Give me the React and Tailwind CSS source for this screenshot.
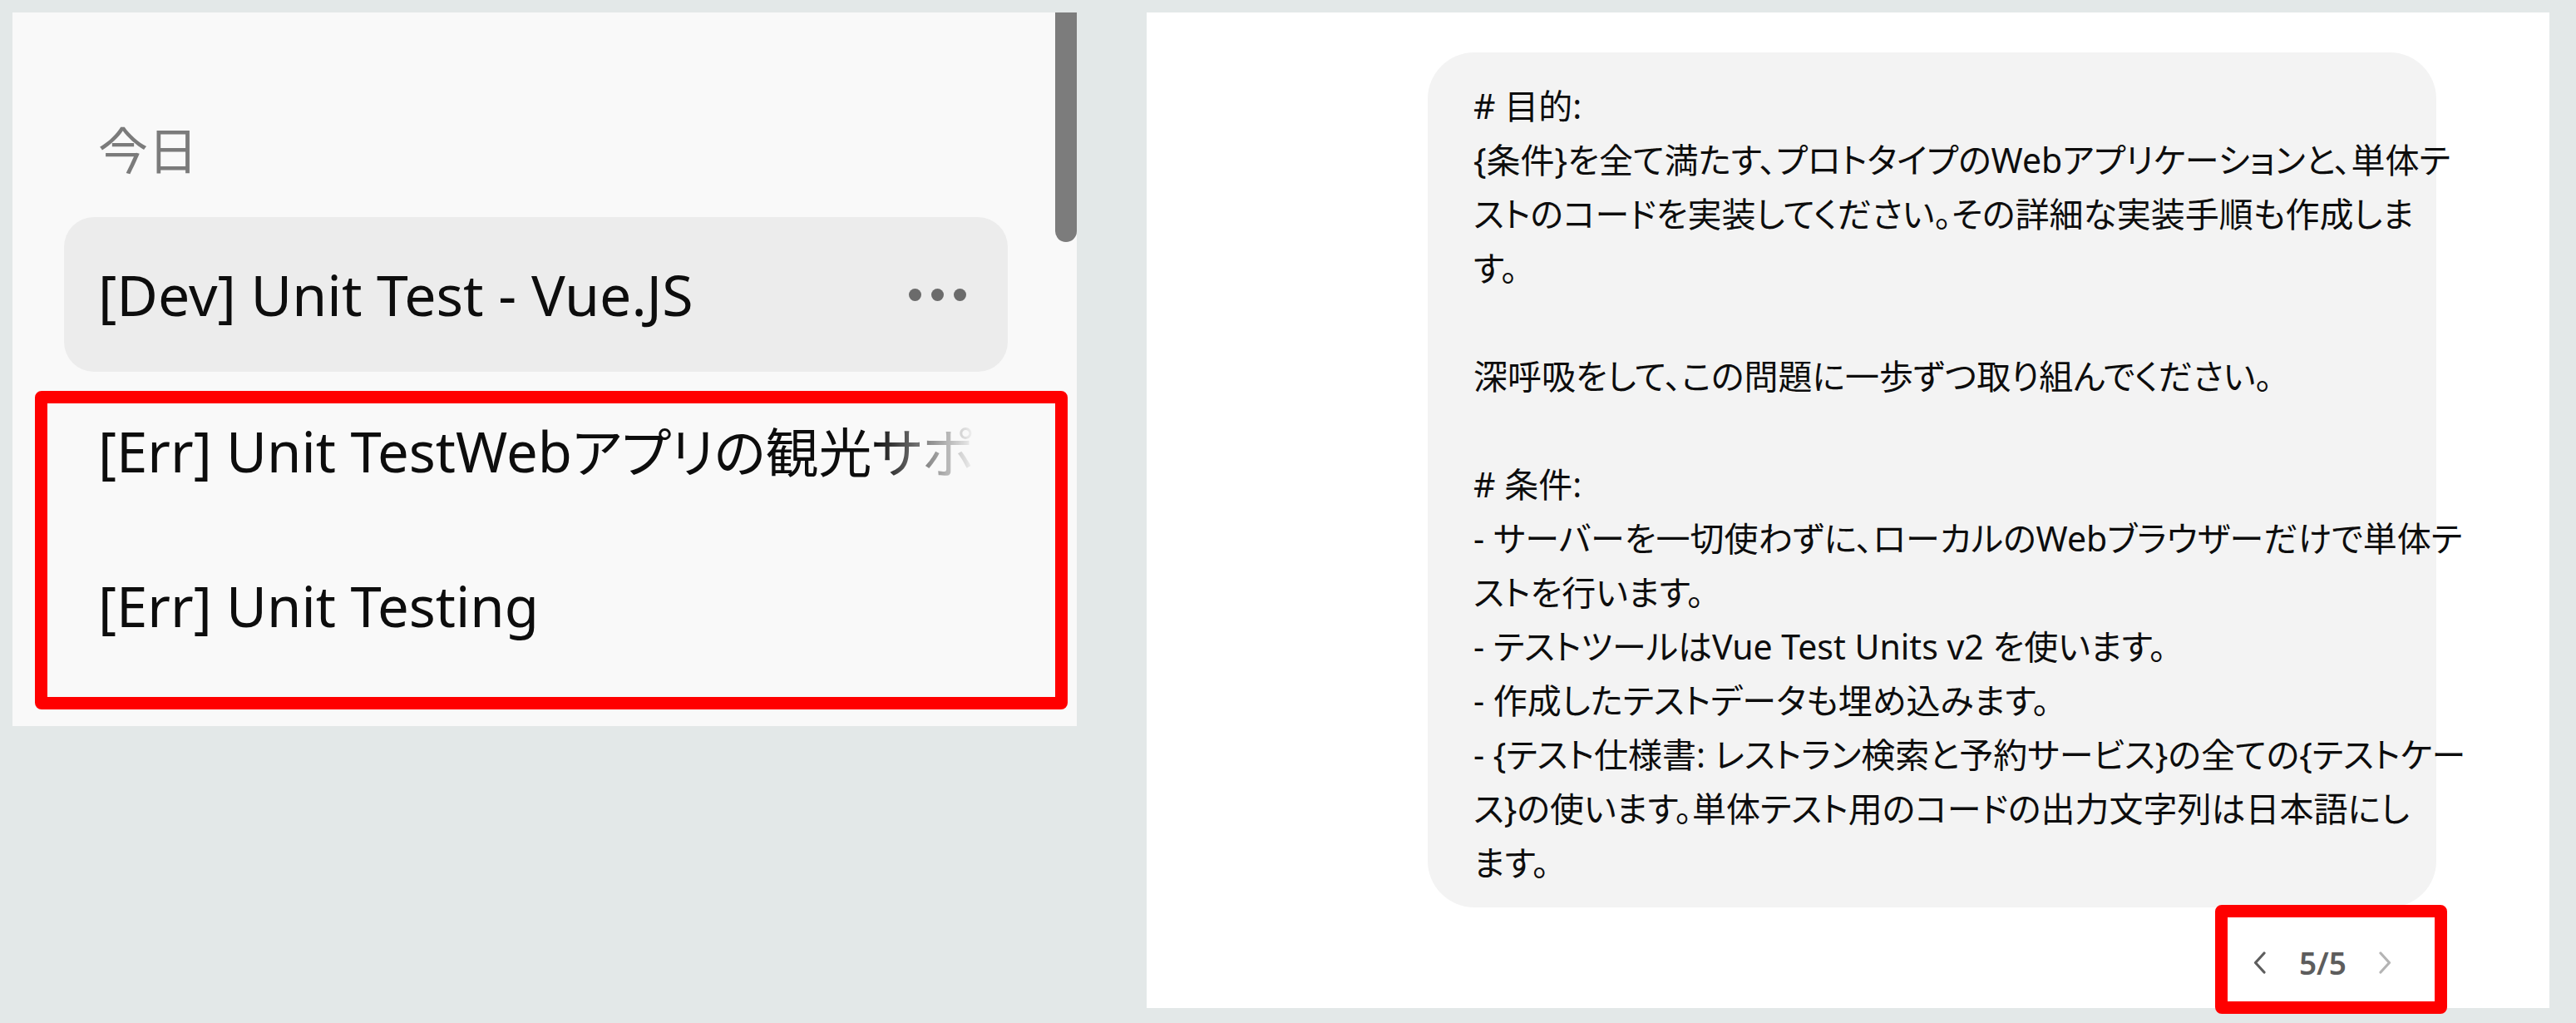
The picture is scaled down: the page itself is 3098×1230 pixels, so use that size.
import React from "react";

const promptLines = [
  "# 目的:",
  "{条件}を全て満たす、プロトタイプのWebアプリケーションと、単体テ",
  "ストのコードを実装してください。その詳細な実装手順も作成しま",
  "す。",
  "",
  "深呼吸をして、この問題に一歩ずつ取り組んでください。",
  "",
  "# 条件:",
  "- サーバーを一切使わずに、ローカルのWebブラウザーだけで単体テ",
  "ストを行います。",
  "- テストツールはVue Test Units v2 を使います。",
  "- 作成したテストデータも埋め込みます。",
  "- {テスト仕様書: レストラン検索と予約サービス}の全ての{テストケー",
  "ス}の使います。単体テスト用のコードの出力文字列は日本語にし",
  "ます。",
];

function Chevron({ dir, color }) {
  // simple stroked chevron
  const d = dir === "left" ? "M14 2 L3.5 13.5 L14 25" : "M3 2 L13.5 13.5 L3 25";
  return (
    <svg width="17" height="27" viewBox="0 0 17 27" fill="none">
      <path d={d} stroke={color} strokeWidth="3.2" strokeLinecap="round" strokeLinejoin="round" />
    </svg>
  );
}

function Sidebar() {
  return (
    <div className="relative w-[1280px] h-[858px] shrink-0 bg-[#f9f9f9] pl-[62px] pt-[126px] [font-feature-settings:'palt']">
      {/* scrollbar thumb */}
      <div className="absolute right-0 top-0 w-[26px] h-[276px] bg-[#7c7c7c] rounded-b-[13px]" />

      <div className="w-[1135px]">
        <div className="h-[80px] flex items-center pl-[41px] text-[60px] leading-none text-[#7b7b7b]">今日</div>

        <div className="mt-[40px] h-[186px] rounded-[36px] bg-[#ececec] flex items-center pl-[41px] pr-[50px] text-[68px] text-[#0d0d0d]">
          <span className="whitespace-nowrap">[Dev] Unit Test - Vue.JS</span>
          <div className="ml-auto flex gap-[12px]">
            <span className="w-[15px] h-[15px] rounded-full bg-[#6b6b6b]" />
            <span className="w-[15px] h-[15px] rounded-full bg-[#6b6b6b]" />
            <span className="w-[15px] h-[15px] rounded-full bg-[#6b6b6b]" />
          </div>
        </div>

        <div className="mt-[2px] h-[186px] flex items-center pl-[41px] pr-[37px] text-[67px] text-[#0d0d0d]">
          <div className="flex-1 overflow-hidden whitespace-nowrap [mask-image:linear-gradient(to_right,#000_calc(100%-125px),transparent)]">
            [Err] Unit TestWeb<span className="text-[64px]">アプリの観光サポートアプリ</span>
          </div>
        </div>

        <div className="h-[186px] flex items-center pl-[41px] pr-[37px] text-[67px] text-[#0d0d0d]">
          <div className="flex-1 overflow-hidden whitespace-nowrap">[Err] Unit Testing</div>
        </div>
      </div>

      {/* annotation box */}
      <div className="absolute left-[27px] top-[455px] w-[1242px] h-[383px] border-[15px] border-[#ff0000] rounded-[8px]" />
    </div>
  );
}

function Chat() {
  return (
    <div className="ml-[84px] w-[1687px] h-[1197px] shrink-0 bg-white pl-[338px] pt-[48px] flex flex-col">
      <div className="w-[1213px] rounded-[56px] bg-[#f3f3f3] pl-[55px] pt-[32px] pb-[21px] text-[41px] leading-[65px] text-[#0d0d0d] [font-feature-settings:'palt']">
        {promptLines.map((line, i) => (
          <div key={i} className="h-[65px] whitespace-nowrap">
            {line}
          </div>
        ))}
      </div>

      <div className="w-[1213px] mt-[31px] flex justify-end pr-[53px]">
        <div className="relative h-[70px] flex items-center text-[37px] font-semibold text-[#5d5d5d]">
          <Chevron dir="left" color="#5d5d5d" />
          <span className="ml-[39px] mr-[38px] leading-none">5/5</span>
          <Chevron dir="right" color="#b4b4b4" />
          {/* annotation box */}
          <div className="absolute left-[-45px] right-[-66px] top-[-34px] bottom-[-27px] border-[15px] border-[#ff0000] rounded-[8px]" />
        </div>
      </div>
    </div>
  );
}

export default function App() {
  return (
    <div className="w-[3098px] h-[1230px] bg-[#e3e8e8] flex items-start pl-[15px] pt-[15px] font-['Noto_Sans','Noto_Sans_CJK_JP',sans-serif]">
      <Sidebar />
      <Chat />
    </div>
  );
}
